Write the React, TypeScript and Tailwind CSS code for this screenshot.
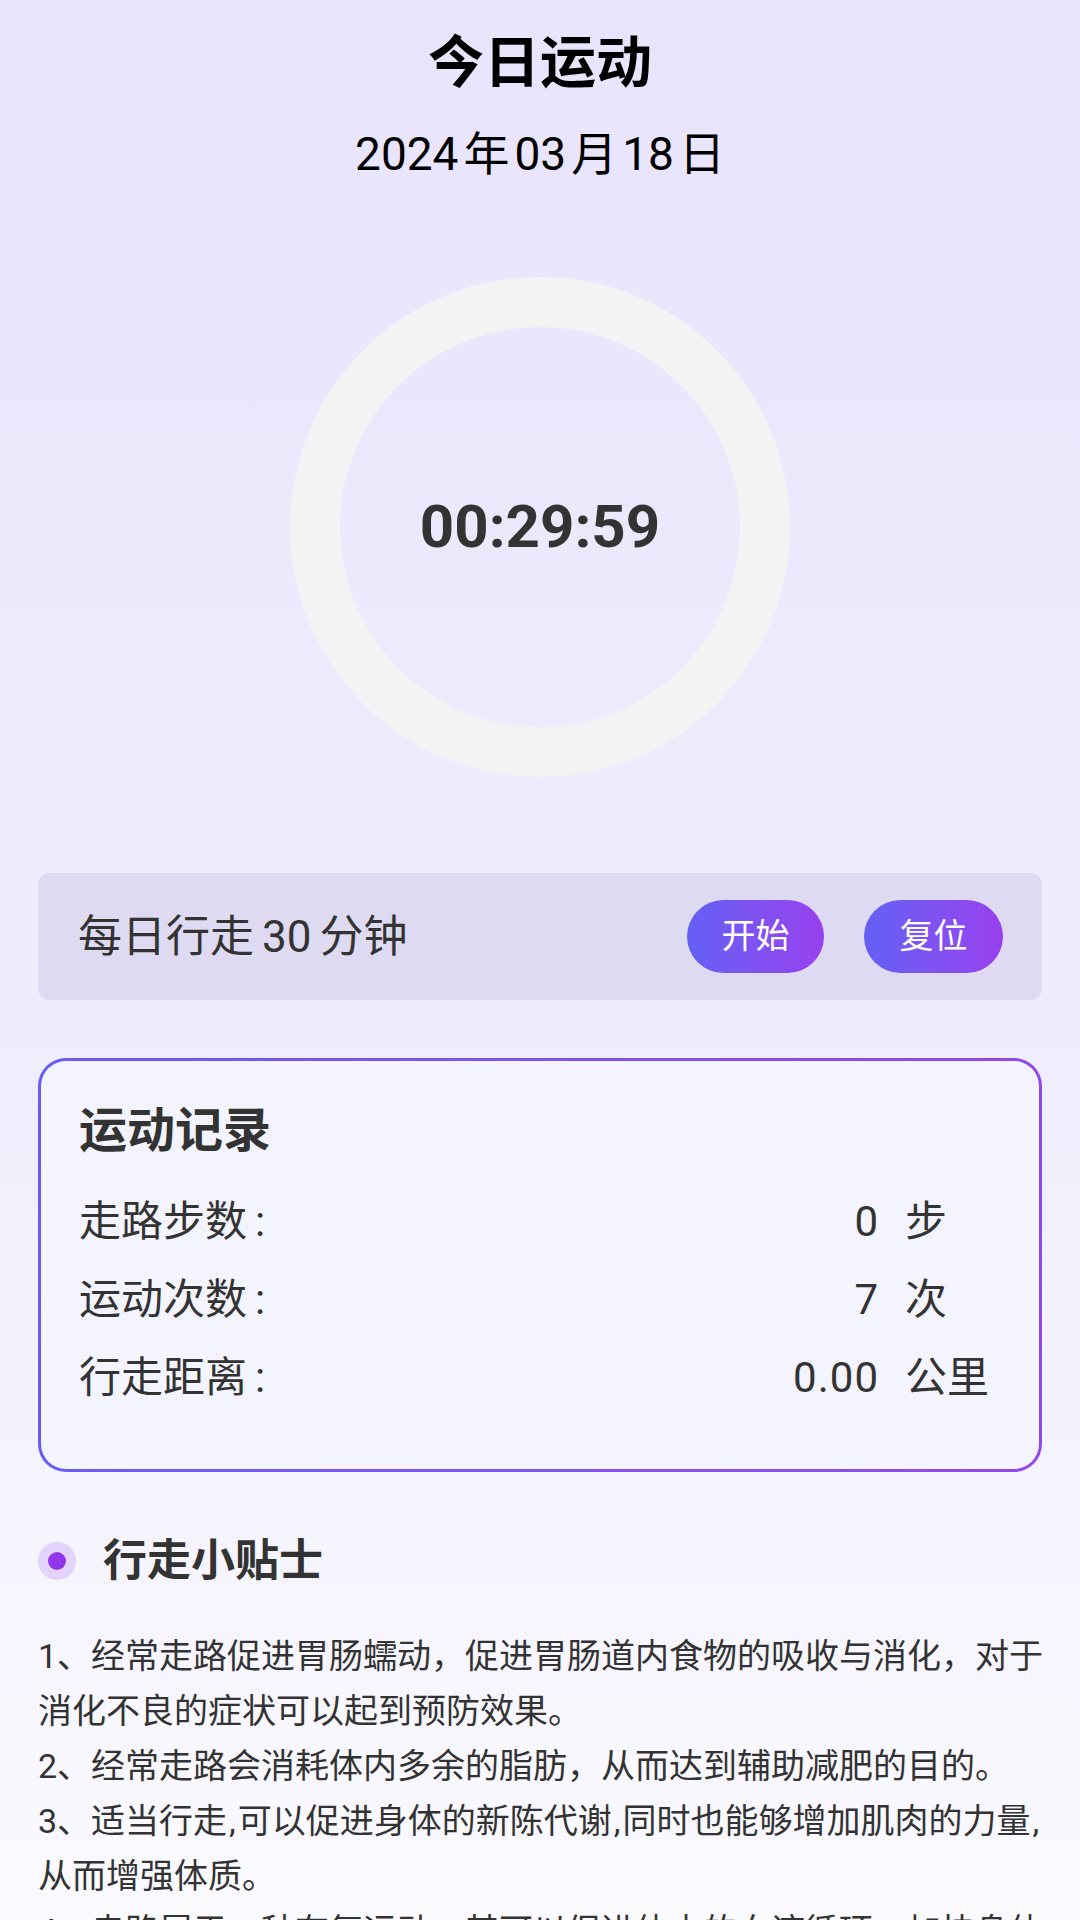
import React from "react";

const FONT = { fontFamily: 'Roboto, "Noto Sans CJK SC", sans-serif' };

function Row({ label, value, unit }: { label: string; value: string; unit: string }) {
  return (
    <div className="flex items-center leading-[78px] text-[42px] text-[#333333]">
      <div className="flex-1">
        {label}
        <span className="ml-[8px]">:</span>
      </div>
      <div className="text-right tracking-[1px]">{value}</div>
      <div className="w-[96px] ml-[26px] text-left">{unit}</div>
    </div>
  );
}

function C() {
  return <span className="mx-[2px]">,</span>;
}

export default function App() {
  return (
    <div
      style={FONT}
      className="w-[1080px] min-h-[1920px] overflow-hidden bg-linear-to-b from-[#e7e4fc] via-[#efedfc] to-[#fcfbff] px-[38px] flex flex-col items-stretch"
    >
      <div className="mt-[35px] text-center text-[56px] leading-[56px] font-bold text-black">今日运动</div>
      <div className="mt-[40px] text-center text-[46px] leading-[46px] text-black">
        2024<span className="mx-[5px]">年</span>03<span className="mx-[5px]">月</span>18<span className="ml-[5px]">日</span>
      </div>

      <div className="mt-[100px] flex justify-center">
        <div className="w-[500px] h-[500px] rounded-full border-[50px] border-[#f3f3f3] flex items-center justify-center">
          <span className="text-[60px] font-bold text-[#333333] leading-none" style={{ fontFamily: "Roboto, sans-serif" }}>
            00:29:59
          </span>
        </div>
      </div>

      <div className="mt-[96px] h-[127px] rounded-[12px] bg-[#dddaf1] flex items-center pl-[40px] pr-[39px]">
        <div className="flex-1 text-[44px] text-[#333333]">
          每日行走<span className="mx-[8px]">30</span>分钟
        </div>
        <div className="flex gap-[40px]">
          <button className="w-[137px] h-[73px] rounded-full bg-linear-to-r from-[#6360f5] to-[#9740ee] text-white text-[34px] flex items-center justify-center">
            开始
          </button>
          <button className="w-[139px] h-[73px] rounded-full bg-linear-to-r from-[#6360f5] to-[#9740ee] text-white text-[34px] flex items-center justify-center">
            复位
          </button>
        </div>
      </div>

      <div className="mt-[58px] rounded-[28px] p-[3px] bg-linear-to-r from-[#6a5cf3] to-[#9347ea]">
        <div className="rounded-[25px] bg-[#f3f4fd] px-[38px] pt-[46px] pb-[52px]">
          <div className="text-[48px] leading-[48px] font-bold text-[#333333]">运动记录</div>
          <div className="mt-[28px]">
            <Row label="走路步数" value="0" unit="步" />
            <Row label="运动次数" value="7" unit="次" />
            <Row label="行走距离" value="0.00" unit="公里" />
          </div>
        </div>
      </div>

      <div className="mt-[67px] flex items-center gap-[27px] h-[44px]">
        <div className="w-[38px] h-[38px] rounded-full bg-[#e3d4fb] flex items-center justify-center">
          <div className="w-[18px] h-[18px] rounded-full bg-[#9236ea]" />
        </div>
        <div className="text-[44px] leading-[44px] font-bold text-[#333333]">行走小贴士</div>
      </div>

      <div className="mt-[46px] text-[34px] leading-[55px] text-[#333333]">
        <div className="whitespace-nowrap">1、经常走路促进胃肠蠕动，促进胃肠道内食物的吸收与消化，对于</div>
        <div className="whitespace-nowrap">消化不良的症状可以起到预防效果。</div>
        <div className="whitespace-nowrap">2、经常走路会消耗体内多余的脂肪，从而达到辅助减肥的目的。</div>
        <div className="whitespace-nowrap">
          3、适当行走<C />可以促进身体的新陈代谢<C />同时也能够增加肌肉的力量<C />
        </div>
        <div className="whitespace-nowrap">从而增强体质。</div>
        <div className="whitespace-nowrap">4、走路属于一种有氧运动，其可以促进体内的血液循环，加快身体</div>
        <div className="whitespace-nowrap">的新陈代谢。</div>
      </div>
    </div>
  );
}
